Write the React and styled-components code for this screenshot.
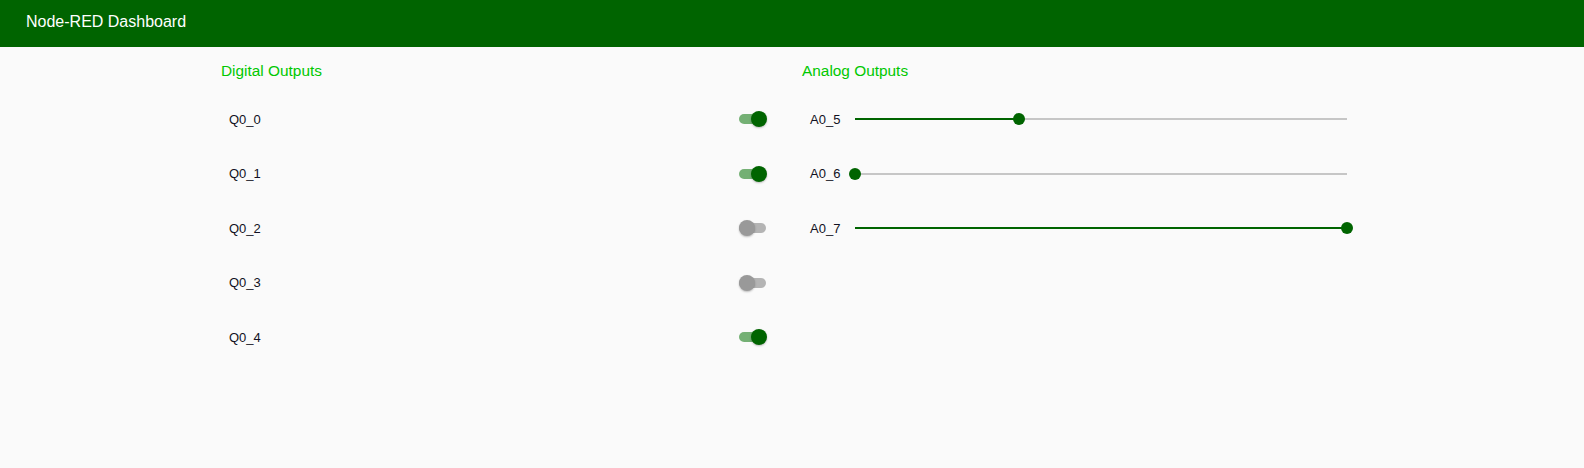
import React from "react";
import styled, { createGlobalStyle } from "styled-components";

const GlobalStyle = createGlobalStyle`
  html, body { margin: 0; padding: 0; background: #fafafa; }
  body { font-family: "Liberation Sans", Arial, sans-serif; }
`;

const Page = styled.div`
  min-height: 468px;
  background: #fafafa;
`;

const Header = styled.header`
  height: 47px;
  background: #006400;
  color: #ffffff;
  display: flex;
  align-items: center;
  padding: 0 0 3px 26px;
  box-sizing: border-box;
  font-size: 16px;
`;

const Content = styled.main`
  display: flex;
  justify-content: center;
  gap: 6px;
  padding-top: 6px;
`;

const Group = styled.section`
  width: 575px;
  display: flex;
  flex-direction: column;
`;

const GroupTitle = styled.div`
  height: 36px;
  display: flex;
  align-items: center;
  padding-left: 7px;
  font-size: 15.4px;
  color: #00c800;
`;

const Rows = styled.div`
  display: flex;
  flex-direction: column;
  gap: 6.6px;
  padding: 6px 6px 0;
`;

const Row = styled.div`
  height: 48px;
  display: flex;
  align-items: center;
  padding-left: 9px;
`;

const Label = styled.span`
  font-size: 13px;
  color: #111122;
  width: ${(p) => (p.$w ? `${p.$w}px` : "auto")};
  flex-shrink: 0;
`;

const SwitchBox = styled.div`
  position: relative;
  width: 28px;
  height: 16px;
  margin-left: auto;
  margin-right: 16px;
`;

const SwitchTrack = styled.div`
  position: absolute;
  left: 0;
  right: 1px;
  top: 3px;
  height: 10px;
  border-radius: 5px;
  background: ${(p) => (p.$on ? "#74b074" : "#b4b4b4")};
`;

const SwitchThumb = styled.div`
  position: absolute;
  top: 0;
  left: ${(p) => (p.$on ? "12px" : "0")};
  width: 16px;
  height: 16px;
  border-radius: 50%;
  background: ${(p) => (p.$on ? "#006400" : "#999999")};
  box-shadow: 0 1px 2px rgba(0, 0, 0, 0.25);
`;

const SliderBox = styled.div`
  position: relative;
  flex: 1;
  height: 12px;
  margin-right: 17px;
`;

const SliderRail = styled.div`
  position: absolute;
  left: 0;
  right: 0;
  top: 5px;
  height: 2px;
  background: #c6c6c6;
`;

const SliderFill = styled.div`
  position: absolute;
  left: 0;
  top: 5px;
  height: 2px;
  background: #006400;
`;

const SliderThumb = styled.div`
  position: absolute;
  top: 0;
  width: 12px;
  height: 12px;
  margin-left: -6px;
  border-radius: 50%;
  background: #006400;
`;

const Switch = ({ on }) => (
  <SwitchBox>
    <SwitchTrack $on={on} />
    <SwitchThumb $on={on} />
  </SwitchBox>
);

const Slider = ({ value }) => (
  <SliderBox>
    <SliderRail />
    <SliderFill style={{ width: `${value * 100}%` }} />
    <SliderThumb style={{ left: `${value * 100}%` }} />
  </SliderBox>
);

const digital = [
  { name: "Q0_0", on: true },
  { name: "Q0_1", on: true },
  { name: "Q0_2", on: false },
  { name: "Q0_3", on: false },
  { name: "Q0_4", on: true },
];

const analog = [
  { name: "A0_5", value: 1 / 3 },
  { name: "A0_6", value: 0 },
  { name: "A0_7", value: 1 },
];

export default function App() {
  return (
    <Page>
      <GlobalStyle />
      <Header>Node-RED Dashboard</Header>
      <Content>
        <Group>
          <GroupTitle>Digital Outputs</GroupTitle>
          <Rows>
            {digital.map((d) => (
              <Row key={d.name}>
                <Label>{d.name}</Label>
                <Switch on={d.on} />
              </Row>
            ))}
          </Rows>
        </Group>
        <Group>
          <GroupTitle>Analog Outputs</GroupTitle>
          <Rows>
            {analog.map((a) => (
              <Row key={a.name}>
                <Label $w={45}>{a.name}</Label>
                <Slider value={a.value} />
              </Row>
            ))}
          </Rows>
        </Group>
      </Content>
    </Page>
  );
}
